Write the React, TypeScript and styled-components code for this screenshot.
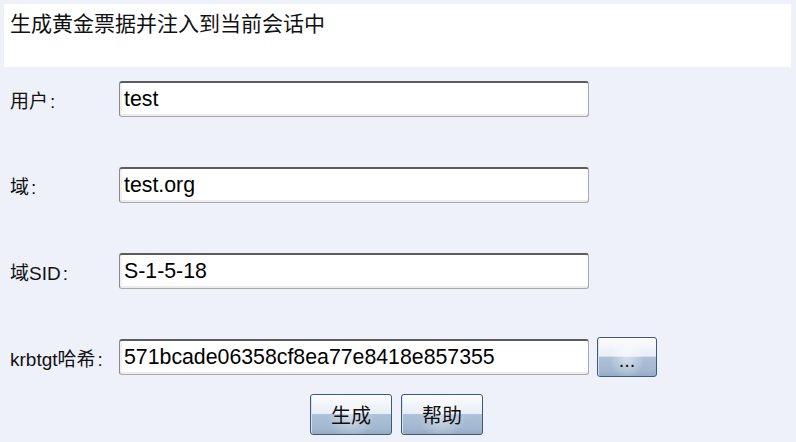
import React from 'react'
import styled, { createGlobalStyle } from 'styled-components'

const GlobalStyle = createGlobalStyle`
	html, body {
		margin: 0;
		padding: 0;
		background: #eef1f9;
	}
	body {
		width: 796px;
		height: 442px;
		overflow: hidden;
		font-family: "Liberation Serif", "Noto Sans CJK SC", serif;
	}
`

const Page = styled.div`
	padding: 4px 5px 0 4px;
	display: flex;
	flex-direction: column;
`

const Header = styled.div`
	background: #ffffff;
	height: 63px;
	padding: 7px 6px 0;
	box-sizing: border-box;
	font-size: 21px;
	line-height: 26px;
	color: #111;
	font-family: "Liberation Serif", "Noto Sans CJK SC", serif;
`

const Form = styled.div`
	display: flex;
	flex-direction: column;
	gap: 50px;
	padding: 14px 0 0 6px;
`

const Row = styled.div`
	display: flex;
	align-items: center;
	height: 36px;
`

const Label = styled.label`
	width: 109px;
	flex: none;
	font-size: 19px;
	color: #111;
	font-family: "Liberation Sans", "Noto Sans CJK SC", sans-serif;
	& span.cn {
		font-family: "Liberation Serif", "Noto Sans CJK SC", serif;
	}
	& span.colon {
		margin-left: 2px;
	}
`

const Input = styled.input`
	width: 470px;
	height: 36px;
	box-sizing: border-box;
	border: 1px solid #a9a9a9;
	border-top: 2px solid #5c5c5c;
	border-left-color: #8a8a8a;
	border-radius: 3px;
	padding: 0 4px;
	font-size: 21.3px;
	font-family: "Liberation Sans", Arial, sans-serif;
	color: #000;
	background: #fff;
	box-shadow: inset 0 -2px 0 #ececec, inset 2px 0 0 #f1f1f1;
	outline: none;
`

const Btn = styled.button<{ $w: number; $h: number }>`
	width: ${p => p.$w}px;
	height: ${p => p.$h}px;
	flex: none;
	border: 1px solid #3f5a78;
	border-radius: 3px;
	padding: 0;
	font-size: 20px;
	color: #111;
	font-family: "Liberation Serif", "Noto Sans CJK SC", serif;
	background:
		radial-gradient(ellipse 30% 60% at 50% 50%, rgba(255,255,255,0.5), rgba(255,255,255,0) 100%),
		linear-gradient(to bottom, #fbfcfe 0%, #e8eef6 48%, #adc1d8 50%, #a3b8d0 85%, #95abc6 100%);
	box-shadow: inset 0 1px 0 #ffffff, inset 1px 0 0 #d9e3ee;
	cursor: pointer;
`

const BrowseBtn = styled(Btn)`
	margin-left: 8px;
	padding-top: 6px;
	font-family: "Liberation Sans", sans-serif;
`

const Actions = styled.div`
	display: flex;
	justify-content: center;
	gap: 9px;
	margin-top: 19px;
	padding-right: 2px;
`

const fields = [
	{ cn: '用户', en: '', value: 'test' },
	{ cn: '域', en: '', value: 'test.org' },
	{ cn: '域', en: 'SID', value: 'S-1-5-18' },
]

const App = () => {
	return (
		<>
			<GlobalStyle />
			<Page>
				<Header>生成黄金票据并注入到当前会话中</Header>
				<Form>
					{fields.map((f, i) => (
						<Row key={i}>
							<Label><span className="cn">{f.cn}</span>{f.en}<span className="colon">:</span></Label>
							<Input defaultValue={f.value} />
						</Row>
					))}
					<Row>
						<Label>krbtgt<span className="cn">哈希</span><span className="colon">:</span></Label>
						<Input defaultValue="571bcade06358cf8ea77e8418e857355" />
						<BrowseBtn $w={60} $h={40}>...</BrowseBtn>
					</Row>
				</Form>
				<Actions>
					<Btn $w={82} $h={41}>生成</Btn>
					<Btn $w={82} $h={41}>帮助</Btn>
				</Actions>
			</Page>
		</>
	)
}

export default App
